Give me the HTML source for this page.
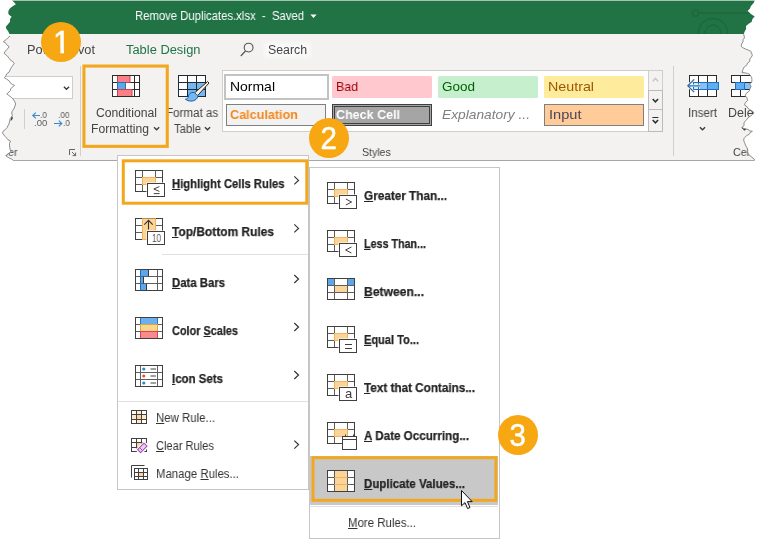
<!DOCTYPE html>
<html lang="en">
<head>
<meta charset="utf-8">
<title>Conditional Formatting - Highlight Cells Rules - Duplicate Values</title>
<style>
html,body{margin:0;padding:0;background:#fff;}
body{width:759px;height:539px;position:relative;overflow:hidden;font-family:"Liberation Sans",sans-serif;}
.a{position:absolute;box-sizing:border-box;}
.t{position:absolute;white-space:nowrap;transform-origin:0 50%;will-change:transform;line-height:16px;font-family:"Liberation Sans",sans-serif;}
.t u{text-decoration:underline;text-underline-offset:1px;text-decoration-thickness:1px;}
svg{position:absolute;overflow:visible;}
.badge{position:absolute;width:40px;height:40px;border-radius:50%;background:#f6a712;color:#fff;font-size:31px;line-height:41px;-webkit-text-stroke:0.5px #fff;text-align:center;font-family:"Liberation Sans",sans-serif;}
.one{display:inline-block;position:relative;left:0.6px;clip-path:polygon(0 0,100% 0,100% 27.8px,64% 27.8px,64% 100%,43% 100%,43% 27.8px,0 27.8px);}
.dg{display:inline-block;transform:scaleX(0.95);}
</style>
</head>
<body>
<!-- title bar -->
<div class="a" style="left:0;top:0;width:759px;height:34px;background:#217346;border-top:1px solid #a3c4b1;overflow:hidden;">
<svg width="759" height="34" viewBox="0 0 759 34" style="left:0;top:-1px;"><g fill="none" stroke="#1b683d" stroke-width="1.3"><circle cx="695.5" cy="13.2" r="3"/><path d="M698.5 13.2H756"/><circle cx="713" cy="33" r="8"/><circle cx="713" cy="33" r="14.5"/></g></svg>
</div>
<!-- ribbon -->
<div class="a" style="left:0;top:34px;width:759px;height:127px;background:#f3f2f1;border-bottom:1px solid #a6a6a6;"></div>

<!-- search glow -->
<div class="a" style="left:264px;top:42px;width:47px;height:16px;background:rgba(255,255,255,0.55);filter:blur(2px);"></div>
<!-- font combo -->
<div class="a" style="left:0;top:76px;width:73px;height:23px;background:#fff;border:1px solid #cfcdcb;"></div>
<!-- separators -->
<div class="a" style="left:24px;top:109px;width:1px;height:20px;background:#d2d0ce;"></div>
<div class="a" style="left:80px;top:66px;width:1px;height:90px;background:#d2d0ce;"></div>
<div class="a" style="left:673px;top:66px;width:1px;height:90px;background:#d2d0ce;"></div>

<!-- styles gallery -->
<div class="a" style="left:222px;top:70px;width:427px;height:62px;background:#fff;border:1px solid #d0cecc;"></div>
<div class="a" style="left:223.5px;top:73.5px;width:105px;height:26.5px;background:#fff;border:2.5px solid #c3c3c3;"></div>
<div class="a" style="left:332px;top:76px;width:100px;height:22px;background:#ffc7ce;border-radius:1.5px;"></div>
<div class="a" style="left:438px;top:76px;width:100px;height:22px;background:#c6efce;border-radius:1.5px;"></div>
<div class="a" style="left:544px;top:76px;width:100px;height:22px;background:#ffeb9c;border-radius:1.5px;"></div>
<div class="a" style="left:226px;top:104px;width:100px;height:22px;background:#f2f2f2;border:1px solid #7f7f7f;"></div>
<div class="a" style="left:332px;top:104px;width:100px;height:22px;background:#a5a5a5;border:1px solid #3f3f3f;box-shadow:inset 0 0 0 1px #a5a5a5,inset 0 0 0 2px #3f3f3f;"></div>
<div class="a" style="left:544px;top:104px;width:100px;height:22px;background:#ffcc99;border:1px solid #7f7f7f;"></div>
<!-- gallery scroll buttons -->
<div class="a" style="left:648px;top:70px;width:15px;height:21px;background:#f3f2f1;border:1px solid #d0cecc;"></div>
<div class="a" style="left:648px;top:90px;width:15px;height:20px;background:#f3f2f1;border:1px solid #bdbbb9;"></div>
<div class="a" style="left:648px;top:109px;width:15px;height:23px;background:#f3f2f1;border:1px solid #bdbbb9;"></div>


<!-- menu 1 -->
<div class="a" style="left:117px;top:155px;width:192px;height:335px;background:#fff;border:1px solid #c6c6c6;"></div>
<div class="a" style="left:162px;top:254px;width:146px;height:1px;background:#e1e1e1;"></div>
<div class="a" style="left:118px;top:401px;width:190px;height:1px;background:#e1e1e1;"></div>

<!-- menu 2 -->
<div class="a" style="left:309px;top:167px;width:191px;height:372px;background:#fff;border:1px solid #c6c6c6;"></div>
<div class="a" style="left:310px;top:456px;width:188px;height:48.5px;background:#c8c8c8;"></div>
<div class="a" style="left:310px;top:506px;width:188px;height:1px;background:#e1e1e1;"></div>

<svg width="759" height="539" viewBox="0 0 759 539" style="left:0;top:0;"><rect x="112.5" y="75.5" width="27" height="21" fill="#fff"/><line x1="117.5" y1="75.5" x2="117.5" y2="96.5" stroke="#2b2b2b" stroke-width="1"/><line x1="134.5" y1="75.5" x2="134.5" y2="96.5" stroke="#2b2b2b" stroke-width="1"/><line x1="112.5" y1="82.5" x2="139.5" y2="82.5" stroke="#2b2b2b" stroke-width="1"/><line x1="112.5" y1="89.5" x2="139.5" y2="89.5" stroke="#2b2b2b" stroke-width="1"/><rect x="112.5" y="75.5" width="27" height="21" fill="none" stroke="#2b2b2b" stroke-width="1"/>
<rect x="117.5" y="75.5" width="12.5" height="7" fill="#fb7f86" stroke="#c8424e" stroke-width="1"/>
<rect x="117.5" y="82.5" width="8" height="7" fill="#5ea6ea" stroke="#2f6fb0" stroke-width="1"/>
<rect x="117.5" y="89.5" width="14.5" height="7" fill="#fb7f86" stroke="#c8424e" stroke-width="1"/>
<rect x="112.5" y="75.5" width="27" height="21" fill="none" stroke="#2b2b2b" stroke-width="1"/>
<rect x="178.5" y="75.5" width="27" height="21" fill="#fff"/><rect x="187.5" y="82.5" width="18" height="14" fill="#74b7f3"/><line x1="187.5" y1="75.5" x2="187.5" y2="96.5" stroke="#1e2a36" stroke-width="1"/><line x1="196.5" y1="75.5" x2="196.5" y2="96.5" stroke="#1e2a36" stroke-width="1"/><line x1="178.5" y1="82.5" x2="205.5" y2="82.5" stroke="#1e2a36" stroke-width="1"/><line x1="178.5" y1="89.5" x2="205.5" y2="89.5" stroke="#1e2a36" stroke-width="1"/><rect x="178.5" y="75.5" width="27" height="21" fill="none" stroke="#1e2a36" stroke-width="1"/>
<path d="M207.6 81.6 L209 83 L197.6 95.6 L194.6 92.8 Z" fill="#fdf3e3" stroke="#2a2a2a" stroke-width="1" stroke-linejoin="round"/>
<path d="M194.4 92.6 C190.5 91.8 188.6 94.4 188.4 96.6 C188.2 98.4 186.8 99.2 185.4 99.2 C188.2 101.6 193.4 101.8 196 99.4 C198 97.6 198.2 95.6 197.8 95.6 Z" fill="#74b7f3" stroke="#1f5f9e" stroke-width="1" stroke-linejoin="round"/>
<rect x="689.5" y="75.5" width="27" height="21" fill="#fff"/><line x1="698.5" y1="75.5" x2="698.5" y2="96.5" stroke="#2b2b2b" stroke-width="1"/><line x1="707.5" y1="75.5" x2="707.5" y2="96.5" stroke="#2b2b2b" stroke-width="1"/><line x1="689.5" y1="82.5" x2="716.5" y2="82.5" stroke="#2b2b2b" stroke-width="1"/><line x1="689.5" y1="89.5" x2="716.5" y2="89.5" stroke="#2b2b2b" stroke-width="1"/><rect x="689.5" y="75.5" width="27" height="21" fill="none" stroke="#2b2b2b" stroke-width="1"/>
<rect x="693.5" y="82.5" width="25" height="7" fill="#62acf0" stroke="#1f6fbf" stroke-width="1"/>
<rect x="694" y="83" width="6" height="6" fill="#d6eafc"/>
<rect x="700" y="83" width="7.5" height="6" fill="#86c0f4"/>
<path d="M698.5 82.5 V89.5 M707.5 82.5 V89.5" fill="none" stroke="#1f6fbf" stroke-width="1"/>
<path d="M700 85.8 H688.4 M694.2 79.4 L687.8 85.8 L694.2 92.2" fill="none" stroke="#eaf4fd" stroke-width="2.6"/>
<path d="M700 85.8 H688.4 M694.2 79.4 L687.8 85.8 L694.2 92.2" fill="none" stroke="#2d6da3" stroke-width="1.2"/>
<rect x="731.5" y="75.5" width="27" height="7" fill="#fff" stroke="#2b2b2b" stroke-width="1"/>
<rect x="731.5" y="89.5" width="27" height="7" fill="#fff" stroke="#2b2b2b" stroke-width="1"/>
<path d="M740.5 75.5 V82.5 M740.5 89.5 V96.5" fill="none" stroke="#2b2b2b" stroke-width="1"/>
<rect x="735.5" y="82.5" width="9" height="7" fill="#62acf0" stroke="#1f6fbf" stroke-width="1"/>
<rect x="745" y="83" width="9" height="6" fill="#86c0f4"/>
<path d="M154.0 127.2 L156.6 129.8 L159.2 127.2" fill="none" stroke="#3a3a3a" stroke-width="1.3"/>
<path d="M204.9 127.2 L207.5 129.8 L210.1 127.2" fill="none" stroke="#3a3a3a" stroke-width="1.3"/>
<path d="M699.9 127.2 L702.5 129.8 L705.1 127.2" fill="none" stroke="#3a3a3a" stroke-width="1.3"/>
<path d="M741.9 127.2 L744.5 129.8 L747.1 127.2" fill="none" stroke="#3a3a3a" stroke-width="1.3"/>
<path d="M63.9 86.7 L66.5 89.3 L69.1 86.7" fill="none" stroke="#3a3a3a" stroke-width="1.3"/>
<path d="M652.7 81.2 L655.4 78.5 L658.1 81.2" fill="none" stroke="#c4c2c0" stroke-width="1.3"/>
<path d="M652.7 99 L655.4 101.8 L658.1 99" fill="none" stroke="#2e2e2e" stroke-width="1.5"/>
<path d="M652.7 120 L655.4 122.8 L658.1 120" fill="none" stroke="#2e2e2e" stroke-width="1.5"/>
<line x1="652.4" y1="117.5" x2="658.4" y2="117.5" stroke="#2e2e2e" stroke-width="1"/>
<circle cx="248.6" cy="47.6" r="4.4" fill="none" stroke="#555" stroke-width="1.1"/>
<line x1="245.5" y1="51" x2="240.8" y2="56" stroke="#555" stroke-width="1.2"/>
<path d="M310.4 14.6 H316.6 L313.5 18 Z" fill="#fff" stroke="none" stroke-width="0"/>
<path d="M40 115.5 H33 M35.8 112.6 L32.8 115.5 L35.8 118.4" fill="none" stroke="#3a88cf" stroke-width="1.15"/>
<path d="M54 123.5 H61.6 M58.8 120.6 L61.8 123.5 L58.8 126.4" fill="none" stroke="#3a88cf" stroke-width="1.15"/>
<path d="M11.2 116.6 C12.6 116.4 13.2 117.6 12.6 118.8 L11.4 120.6 L10.4 120.4 L11.2 118.6 Z" fill="#333" stroke="none" stroke-width="0"/>
<path d="M69.5 155 V149.5 H75" fill="none" stroke="#666" stroke-width="1"/>
<path d="M72 152 L75.6 155.6 M75.6 152.6 V155.6 H72.6" fill="none" stroke="#666" stroke-width="1"/>
<rect x="135.5" y="170.5" width="27" height="21" fill="#fff"/><rect x="142.5" y="177.5" width="13" height="7" fill="#fbd49a"/><line x1="142.5" y1="170.5" x2="142.5" y2="191.5" stroke="#5e5e5e" stroke-width="1"/><line x1="155.5" y1="170.5" x2="155.5" y2="191.5" stroke="#5e5e5e" stroke-width="1"/><line x1="135.5" y1="177.5" x2="162.5" y2="177.5" stroke="#5e5e5e" stroke-width="1"/><line x1="135.5" y1="184.5" x2="162.5" y2="184.5" stroke="#5e5e5e" stroke-width="1"/><rect x="135.5" y="170.5" width="27" height="21" fill="none" stroke="#404040" stroke-width="1"/>
<rect x="142.5" y="177.5" width="13" height="7" fill="#fbd49a" stroke="#f3b458" stroke-width="1"/>
<rect x="146.5" y="182.5" width="19" height="15" fill="#fff"/><rect x="147.5" y="183.5" width="17" height="13" fill="#fff" stroke="#404040" stroke-width="1"/>
<path d="M159.4 186.6 L153.8 189 L159.4 191.4 M153.8 193.6 H159.6" fill="none" stroke="#404040" stroke-width="1"/>
<rect x="135.5" y="218.5" width="27" height="21" fill="#fff"/><line x1="142.5" y1="218.5" x2="142.5" y2="239.5" stroke="#5e5e5e" stroke-width="1"/><line x1="155.5" y1="218.5" x2="155.5" y2="239.5" stroke="#5e5e5e" stroke-width="1"/><line x1="135.5" y1="225.5" x2="162.5" y2="225.5" stroke="#5e5e5e" stroke-width="1"/><line x1="135.5" y1="232.5" x2="162.5" y2="232.5" stroke="#5e5e5e" stroke-width="1"/><rect x="135.5" y="218.5" width="27" height="21" fill="none" stroke="#404040" stroke-width="1"/>
<rect x="142.5" y="218.5" width="13" height="21" fill="#fbd49a" stroke="#f3b458" stroke-width="1"/>
<line x1="142.5" y1="218.5" x2="155.5" y2="218.5" stroke="#b98a4a" stroke-width="1"/>
<path d="M148.5 229.5 V220.5 M144.3 224.7 L148.5 220.3 L152.7 224.7" fill="none" stroke="#333" stroke-width="1.1"/>
<rect x="146.5" y="230.5" width="19" height="15" fill="#fff"/><rect x="147.5" y="231.5" width="17" height="13" fill="#fff" stroke="#404040" stroke-width="1"/>
<rect x="135.5" y="269.5" width="27" height="21" fill="#fff"/><rect x="140.5" y="269.5" width="8" height="7" fill="#5ea6ea"/><rect x="140.5" y="276.5" width="3" height="7" fill="#5ea6ea"/><rect x="140.5" y="283.5" width="6" height="7" fill="#5ea6ea"/><line x1="157.5" y1="269.5" x2="157.5" y2="290.5" stroke="#5e5e5e" stroke-width="1"/><line x1="135.5" y1="276.5" x2="162.5" y2="276.5" stroke="#5e5e5e" stroke-width="1"/><line x1="135.5" y1="283.5" x2="162.5" y2="283.5" stroke="#5e5e5e" stroke-width="1"/><rect x="135.5" y="269.5" width="27" height="21" fill="none" stroke="#404040" stroke-width="1"/>
<path d="M148.5 269.5 V276.5 M143.5 276.5 V283.5 M146.5 283.5 V290.5" fill="none" stroke="#3a3a3a" stroke-width="1"/>
<line x1="140.5" y1="269.5" x2="140.5" y2="290.5" stroke="#1b6ec2" stroke-width="1"/>
<rect x="135.5" y="317.5" width="27" height="21" fill="#fff"/><line x1="135.5" y1="324.5" x2="162.5" y2="324.5" stroke="#5e5e5e" stroke-width="1"/><line x1="135.5" y1="331.5" x2="162.5" y2="331.5" stroke="#5e5e5e" stroke-width="1"/><rect x="135.5" y="317.5" width="27" height="21" fill="none" stroke="#404040" stroke-width="1"/>
<rect x="140.5" y="317.5" width="17" height="7" fill="#6cb0ee" stroke="#2a78c4" stroke-width="1"/>
<rect x="140.5" y="324.5" width="17" height="7" fill="#f9d58d" stroke="#e0a43c" stroke-width="1"/>
<rect x="140.5" y="331.5" width="17" height="7" fill="#fb8a8f" stroke="#d8474f" stroke-width="1"/>
<rect x="135.5" y="317.5" width="27" height="21" fill="none" stroke="#404040" stroke-width="1"/>
<rect x="135.5" y="365.5" width="27" height="21" fill="#fff"/><line x1="140.5" y1="365.5" x2="140.5" y2="386.5" stroke="#5e5e5e" stroke-width="1"/><line x1="157.5" y1="365.5" x2="157.5" y2="386.5" stroke="#5e5e5e" stroke-width="1"/><line x1="135.5" y1="372.5" x2="162.5" y2="372.5" stroke="#5e5e5e" stroke-width="1"/><line x1="135.5" y1="379.5" x2="162.5" y2="379.5" stroke="#5e5e5e" stroke-width="1"/><rect x="135.5" y="365.5" width="27" height="21" fill="none" stroke="#404040" stroke-width="1"/>
<circle cx="143.8" cy="369" r="1.6" fill="#2b87c9"/>
<line x1="150.5" y1="369" x2="156" y2="369" stroke="#404040" stroke-width="1"/>
<circle cx="143.8" cy="376" r="1.6" fill="#e0533e"/>
<line x1="150.5" y1="376" x2="156" y2="376" stroke="#404040" stroke-width="1"/>
<circle cx="143.8" cy="383" r="1.6" fill="#2b87c9"/>
<line x1="150.5" y1="383" x2="156" y2="383" stroke="#404040" stroke-width="1"/>
<rect x="131.5" y="410.5" width="15" height="13" fill="#fff"/><rect x="136.5" y="414.5" width="5" height="5" fill="#fbd49a"/><rect x="136.5" y="410.5" width="5" height="4" fill="#fde9c9"/><rect x="136.5" y="419.5" width="5" height="4" fill="#fde9c9"/><rect x="131.5" y="414.5" width="5" height="5" fill="#fde9c9"/><rect x="141.5" y="414.5" width="5" height="5" fill="#fde9c9"/><line x1="136.5" y1="410.5" x2="136.5" y2="423.5" stroke="#404040" stroke-width="1"/><line x1="141.5" y1="410.5" x2="141.5" y2="423.5" stroke="#404040" stroke-width="1"/><line x1="131.5" y1="414.5" x2="146.5" y2="414.5" stroke="#404040" stroke-width="1"/><line x1="131.5" y1="419.5" x2="146.5" y2="419.5" stroke="#404040" stroke-width="1"/><rect x="131.5" y="410.5" width="15" height="13" fill="none" stroke="#404040" stroke-width="1"/>
<rect x="131.5" y="438.5" width="15" height="13" fill="#fff"/><rect x="136.5" y="442.5" width="5" height="5" fill="#fbd49a"/><line x1="136.5" y1="438.5" x2="136.5" y2="451.5" stroke="#404040" stroke-width="1"/><line x1="141.5" y1="438.5" x2="141.5" y2="451.5" stroke="#404040" stroke-width="1"/><line x1="131.5" y1="442.5" x2="146.5" y2="442.5" stroke="#404040" stroke-width="1"/><line x1="131.5" y1="447.5" x2="146.5" y2="447.5" stroke="#404040" stroke-width="1"/><rect x="131.5" y="438.5" width="15" height="13" fill="none" stroke="#404040" stroke-width="1"/>
<path d="M136.6 449.8 L144.2 442.2 L148.2 446.2 L140.6 453.8 Z" fill="#fff" stroke="#fff" stroke-width="2.2" stroke-linejoin="round"/>
<path d="M137.6 449.6 L144 443.2 L147 446.2 L140.6 452.6 Z" fill="#ead3f1" stroke="#a550c0" stroke-width="1.1" stroke-linejoin="round"/>
<path d="M139.6 447.6 L142.6 450.6" fill="none" stroke="#a550c0" stroke-width="1"/>
<path d="M131.5 477.5 V465.5 H144.5" fill="none" stroke="#404040" stroke-width="1"/>
<rect x="134.5" y="468.5" width="13" height="11" fill="#fff"/><rect x="138.5" y="472.5" width="5" height="4" fill="#fbd49a"/><line x1="138.5" y1="468.5" x2="138.5" y2="479.5" stroke="#404040" stroke-width="1"/><line x1="143.5" y1="468.5" x2="143.5" y2="479.5" stroke="#404040" stroke-width="1"/><line x1="134.5" y1="472.5" x2="147.5" y2="472.5" stroke="#404040" stroke-width="1"/><line x1="134.5" y1="476.5" x2="147.5" y2="476.5" stroke="#404040" stroke-width="1"/><rect x="134.5" y="468.5" width="13" height="11" fill="none" stroke="#404040" stroke-width="1"/>
<path d="M294.3 176.4 L298.5 180.4 L294.3 184.4" fill="none" stroke="#383838" stroke-width="1.25"/>
<path d="M294.3 224.4 L298.5 228.4 L294.3 232.4" fill="none" stroke="#383838" stroke-width="1.25"/>
<path d="M294.3 275 L298.5 279 L294.3 283" fill="none" stroke="#383838" stroke-width="1.25"/>
<path d="M294.3 323 L298.5 327 L294.3 331" fill="none" stroke="#383838" stroke-width="1.25"/>
<path d="M294.3 371 L298.5 375 L294.3 379" fill="none" stroke="#383838" stroke-width="1.25"/>
<path d="M294.3 440.6 L298.5 444.6 L294.3 448.6" fill="none" stroke="#383838" stroke-width="1.25"/>
<rect x="327.5" y="182.5" width="27" height="21" fill="#fff"/><rect x="334.5" y="189.5" width="13" height="7" fill="#fbd49a"/><line x1="334.5" y1="182.5" x2="334.5" y2="203.5" stroke="#5e5e5e" stroke-width="1"/><line x1="347.5" y1="182.5" x2="347.5" y2="203.5" stroke="#5e5e5e" stroke-width="1"/><line x1="327.5" y1="189.5" x2="354.5" y2="189.5" stroke="#5e5e5e" stroke-width="1"/><line x1="327.5" y1="196.5" x2="354.5" y2="196.5" stroke="#5e5e5e" stroke-width="1"/><rect x="327.5" y="182.5" width="27" height="21" fill="none" stroke="#404040" stroke-width="1"/>
<rect x="334.5" y="189.5" width="13" height="7" fill="#fbd49a" stroke="#f3b458" stroke-width="1"/>
<rect x="338.5" y="194.5" width="19" height="15" fill="#fff"/><rect x="339.5" y="195.5" width="17" height="13" fill="#fff" stroke="#404040" stroke-width="1"/>
<path d="M345.8 199 L351.6 202 L345.8 205" fill="none" stroke="#404040" stroke-width="1"/>
<rect x="327.5" y="230.5" width="27" height="21" fill="#fff"/><rect x="334.5" y="237.5" width="13" height="7" fill="#fbd49a"/><line x1="334.5" y1="230.5" x2="334.5" y2="251.5" stroke="#5e5e5e" stroke-width="1"/><line x1="347.5" y1="230.5" x2="347.5" y2="251.5" stroke="#5e5e5e" stroke-width="1"/><line x1="327.5" y1="237.5" x2="354.5" y2="237.5" stroke="#5e5e5e" stroke-width="1"/><line x1="327.5" y1="244.5" x2="354.5" y2="244.5" stroke="#5e5e5e" stroke-width="1"/><rect x="327.5" y="230.5" width="27" height="21" fill="none" stroke="#404040" stroke-width="1"/>
<rect x="334.5" y="237.5" width="13" height="7" fill="#fbd49a" stroke="#f3b458" stroke-width="1"/>
<rect x="338.5" y="242.5" width="19" height="15" fill="#fff"/><rect x="339.5" y="243.5" width="17" height="13" fill="#fff" stroke="#404040" stroke-width="1"/>
<path d="M351.4 247 L345.6 250 L351.4 253" fill="none" stroke="#404040" stroke-width="1"/>
<rect x="327.5" y="278.5" width="27" height="21" fill="#fff"/><rect x="327.5" y="278.5" width="7" height="7" fill="#5ea6ea"/><rect x="347.5" y="278.5" width="7" height="7" fill="#5ea6ea"/><rect x="334.5" y="285.5" width="13" height="7" fill="#fbd49a"/><line x1="334.5" y1="278.5" x2="334.5" y2="299.5" stroke="#5e5e5e" stroke-width="1"/><line x1="347.5" y1="278.5" x2="347.5" y2="299.5" stroke="#5e5e5e" stroke-width="1"/><line x1="327.5" y1="285.5" x2="354.5" y2="285.5" stroke="#5e5e5e" stroke-width="1"/><line x1="327.5" y1="292.5" x2="354.5" y2="292.5" stroke="#5e5e5e" stroke-width="1"/><rect x="327.5" y="278.5" width="27" height="21" fill="none" stroke="#404040" stroke-width="1"/>
<rect x="327.5" y="326.5" width="27" height="21" fill="#fff"/><rect x="334.5" y="333.5" width="13" height="7" fill="#fbd49a"/><line x1="334.5" y1="326.5" x2="334.5" y2="347.5" stroke="#5e5e5e" stroke-width="1"/><line x1="347.5" y1="326.5" x2="347.5" y2="347.5" stroke="#5e5e5e" stroke-width="1"/><line x1="327.5" y1="333.5" x2="354.5" y2="333.5" stroke="#5e5e5e" stroke-width="1"/><line x1="327.5" y1="340.5" x2="354.5" y2="340.5" stroke="#5e5e5e" stroke-width="1"/><rect x="327.5" y="326.5" width="27" height="21" fill="none" stroke="#404040" stroke-width="1"/>
<rect x="334.5" y="333.5" width="13" height="7" fill="#fbd49a" stroke="#f3b458" stroke-width="1"/>
<rect x="338.5" y="338.5" width="19" height="15" fill="#fff"/><rect x="339.5" y="339.5" width="17" height="13" fill="#fff" stroke="#404040" stroke-width="1"/>
<path d="M345 344.5 H352 M345 348.5 H352" fill="none" stroke="#404040" stroke-width="1"/>
<rect x="327.5" y="374.5" width="27" height="21" fill="#fff"/><rect x="334.5" y="381.5" width="13" height="7" fill="#fbd49a"/><line x1="334.5" y1="374.5" x2="334.5" y2="395.5" stroke="#5e5e5e" stroke-width="1"/><line x1="347.5" y1="374.5" x2="347.5" y2="395.5" stroke="#5e5e5e" stroke-width="1"/><line x1="327.5" y1="381.5" x2="354.5" y2="381.5" stroke="#5e5e5e" stroke-width="1"/><line x1="327.5" y1="388.5" x2="354.5" y2="388.5" stroke="#5e5e5e" stroke-width="1"/><rect x="327.5" y="374.5" width="27" height="21" fill="none" stroke="#404040" stroke-width="1"/>
<rect x="334.5" y="381.5" width="13" height="7" fill="#fbd49a" stroke="#f3b458" stroke-width="1"/>
<rect x="338.5" y="386.5" width="19" height="15" fill="#fff"/><rect x="339.5" y="387.5" width="17" height="13" fill="#fff" stroke="#404040" stroke-width="1"/>
<rect x="327.5" y="422.5" width="27" height="21" fill="#fff"/><rect x="334.5" y="429.5" width="13" height="7" fill="#fbd49a"/><line x1="334.5" y1="422.5" x2="334.5" y2="443.5" stroke="#5e5e5e" stroke-width="1"/><line x1="347.5" y1="422.5" x2="347.5" y2="443.5" stroke="#5e5e5e" stroke-width="1"/><line x1="327.5" y1="429.5" x2="354.5" y2="429.5" stroke="#5e5e5e" stroke-width="1"/><line x1="327.5" y1="436.5" x2="354.5" y2="436.5" stroke="#5e5e5e" stroke-width="1"/><rect x="327.5" y="422.5" width="27" height="21" fill="none" stroke="#404040" stroke-width="1"/>
<rect x="334.5" y="429.5" width="13" height="7" fill="#fbd49a" stroke="#f3b458" stroke-width="1"/>
<rect x="342.5" y="436.5" width="14" height="13" fill="#fff" stroke="#404040" stroke-width="1"/>
<line x1="342.5" y1="439.5" x2="356.5" y2="439.5" stroke="#404040" stroke-width="1"/>
<path d="M345.5 434.5 V437 M353.5 434.5 V437" fill="none" stroke="#404040" stroke-width="1"/>
<rect x="327.5" y="470.5" width="27" height="21" fill="#fff"/><rect x="334.5" y="470.5" width="13" height="21" fill="#fbd49a"/><line x1="334.5" y1="470.5" x2="334.5" y2="491.5" stroke="#5e5e5e" stroke-width="1"/><line x1="347.5" y1="470.5" x2="347.5" y2="491.5" stroke="#5e5e5e" stroke-width="1"/><line x1="327.5" y1="477.5" x2="354.5" y2="477.5" stroke="#5e5e5e" stroke-width="1"/><line x1="327.5" y1="484.5" x2="354.5" y2="484.5" stroke="#5e5e5e" stroke-width="1"/><rect x="327.5" y="470.5" width="27" height="21" fill="none" stroke="#404040" stroke-width="1"/>
<path d="M334.5 477.5 H347.5 M334.5 484.5 H347.5" fill="none" stroke="#f3b458" stroke-width="1"/></svg>
<span class="t" id="t0" style="left:135px;top:8px;font-size:12.5px;color:#fff;transform:scaleX(0.9043);">Remove Duplicates.xlsx&nbsp; -&nbsp; Saved</span>
<span class="t" id="t1" style="left:27px;top:42px;font-size:12px;color:#444;transform:scaleX(1.0620);">Power Pivot</span>
<span class="t" id="t2" style="left:125.5px;top:42px;font-size:12px;color:#217346;transform:scaleX(1.0739);">Table Design</span>
<span class="t" id="t3" style="left:268px;top:42px;font-size:12px;color:#444;transform:scaleX(1.0255);">Search</span>
<span class="t" id="t4" style="left:96px;top:105px;font-size:12px;color:#444;transform:scaleX(1.0159);">Conditional</span>
<span class="t" id="t5" style="left:91px;top:121px;font-size:12px;color:#444;transform:scaleX(1.0112);">Formatting</span>
<span class="t" id="t6" style="left:166px;top:105px;font-size:12px;color:#444;transform:scaleX(0.9664);">Format as</span>
<span class="t" id="t7" style="left:174px;top:121px;font-size:12px;color:#444;transform:scaleX(0.9412);">Table</span>
<span class="t" id="t8" style="left:688px;top:105px;font-size:12px;color:#444;transform:scaleX(0.9662);">Insert</span>
<span class="t" id="t9" style="left:728px;top:105px;font-size:12px;color:#444;transform:scaleX(1.0378);">Delete</span>
<span class="t" id="t10" style="left:362px;top:144px;font-size:11px;color:#444;transform:scaleX(0.9610);">Styles</span>
<span class="t" id="t11" style="left:-20.5px;top:144px;font-size:11px;color:#444;transform:scaleX(0.9585);">Number</span>
<span class="t" id="t12" style="left:733.3px;top:144px;font-size:11px;color:#444;transform:scaleX(0.9692);">Cells</span>
<span class="t" id="t13" style="left:230px;top:79px;font-size:13px;color:#000;transform:scaleX(1.0738);">Normal</span>
<span class="t" id="t14" style="left:336px;top:79px;font-size:13px;color:#9c0006;transform:scaleX(0.9507);">Bad</span>
<span class="t" id="t15" style="left:442px;top:79px;font-size:13px;color:#006100;transform:scaleX(1.0373);">Good</span>
<span class="t" id="t16" style="left:548px;top:79px;font-size:13px;color:#9c5700;transform:scaleX(1.0973);">Neutral</span>
<span class="t" id="t17" style="left:230px;top:107px;font-size:13px;color:#f5871a;font-weight:700;transform:scaleX(0.9703);">Calculation</span>
<span class="t" id="t18" style="left:336px;top:107px;font-size:13px;color:#fff;font-weight:700;transform:scaleX(0.9626);">Check Cell</span>
<span class="t" id="t19" style="left:442px;top:107px;font-size:13px;color:#7f7f7f;font-style:italic;transform:scaleX(1.0588);">Explanatory ...</span>
<span class="t" id="t20" style="left:548.5px;top:107px;font-size:13px;color:#4d4656;transform:scaleX(1.1237);">Input</span>
<span class="t" id="t21" style="left:172px;top:176px;font-size:13px;color:#242424;font-weight:700;transform:scaleX(0.8653);-webkit-text-stroke:0.25px #242424;"><u>H</u>ighlight Cells Rules</span>
<span class="t" id="t22" style="left:172px;top:224px;font-size:13px;color:#242424;font-weight:700;transform:scaleX(0.9190);-webkit-text-stroke:0.25px #242424;"><u>T</u>op/Bottom Rules</span>
<span class="t" id="t23" style="left:172px;top:275px;font-size:13px;color:#242424;font-weight:700;transform:scaleX(0.8731);-webkit-text-stroke:0.25px #242424;"><u>D</u>ata Bars</span>
<span class="t" id="t24" style="left:172px;top:323px;font-size:13px;color:#242424;font-weight:700;transform:scaleX(0.8378);-webkit-text-stroke:0.25px #242424;">Color <u>S</u>cales</span>
<span class="t" id="t25" style="left:172px;top:371px;font-size:13px;color:#242424;font-weight:700;transform:scaleX(0.8822);-webkit-text-stroke:0.25px #242424;"><u>I</u>con Sets</span>
<span class="t" id="t26" style="left:156px;top:410px;font-size:12.5px;color:#333;transform:scaleX(0.9130);"><u>N</u>ew Rule...</span>
<span class="t" id="t27" style="left:156px;top:438px;font-size:12.5px;color:#333;transform:scaleX(0.8880);"><u>C</u>lear Rules</span>
<span class="t" id="t28" style="left:156px;top:466px;font-size:12.5px;color:#333;transform:scaleX(0.9116);">Manage <u>R</u>ules...</span>
<span class="t" id="t29" style="left:364px;top:188px;font-size:13px;color:#242424;font-weight:700;transform:scaleX(0.9045);-webkit-text-stroke:0.25px #242424;"><u>G</u>reater Than...</span>
<span class="t" id="t30" style="left:364px;top:236px;font-size:13px;color:#242424;font-weight:700;transform:scaleX(0.8249);-webkit-text-stroke:0.25px #242424;"><u>L</u>ess Than...</span>
<span class="t" id="t31" style="left:364px;top:284px;font-size:13px;color:#242424;font-weight:700;transform:scaleX(0.9329);-webkit-text-stroke:0.25px #242424;"><u>B</u>etween...</span>
<span class="t" id="t32" style="left:364px;top:332px;font-size:13px;color:#242424;font-weight:700;transform:scaleX(0.8492);-webkit-text-stroke:0.25px #242424;"><u>E</u>qual To...</span>
<span class="t" id="t33" style="left:364px;top:380px;font-size:13px;color:#242424;font-weight:700;transform:scaleX(0.9004);-webkit-text-stroke:0.25px #242424;"><u>T</u>ext that Contains...</span>
<span class="t" id="t34" style="left:364px;top:428px;font-size:13px;color:#242424;font-weight:700;transform:scaleX(0.8953);-webkit-text-stroke:0.25px #242424;"><u>A</u> Date Occurring...</span>
<span class="t" id="t35" style="left:364px;top:476px;font-size:13px;color:#242424;font-weight:700;transform:scaleX(0.8846);-webkit-text-stroke:0.25px #242424;"><u>D</u>uplicate Values...</span>
<span class="t" id="t36" style="left:348px;top:515px;font-size:12.5px;color:#333;transform:scaleX(0.9147);"><u>M</u>ore Rules...</span>
<span class="t" id="t37" style="left:40.3px;top:107px;font-size:9.5px;color:#5c5c5c;transform:scaleX(0.8693);">.0</span>
<span class="t" id="t38" style="left:34.3px;top:115px;font-size:9.5px;color:#5c5c5c;transform:scaleX(0.9759);">.00</span>
<span class="t" id="t39" style="left:58px;top:107px;font-size:9.5px;color:#5c5c5c;transform:scaleX(0.8624);">.00</span>
<span class="t" id="t40" style="left:62.6px;top:115px;font-size:9.5px;color:#5c5c5c;transform:scaleX(0.8567);">.0</span>
<span class="t" id="t41" style="left:152.2px;top:230px;font-size:10.5px;color:#4a4a4a;transform:scaleX(0.7786);">10</span>
<span class="t" id="t42" style="left:344.6px;top:386px;font-size:13px;color:#3a3a3a;transform:scaleX(0.9952);">a</span>
<svg width="759" height="539" viewBox="0 0 759 539" style="left:0;top:0;"><path d="M0 -1 L11.7 0 L13.5 1.8 L15.9 4.2 L14.2 5.2 L12 6.8 L10 8.3 L8.4 10.9 L8.3 13.4 L9.2 15 L11.7 16.7 L10.1 18.8 L10 21.7 L7.8 24.5 L5.8 26.7 L6.3 28.7 L8.3 31.6 L9.2 33.4 L10 36 L7.9 37.8 L6.4 39.4 L3.3 41.7 L5.9 43.2 L6.6 44.7 L9.2 46.7 L7.2 49.2 L5.3 51.2 L4.2 53.4 L6.1 55 L7.6 56.3 L9.2 58.4 L10.1 59.8 L12.9 61.7 L14.2 63.4 L12.5 65.7 L11.3 67.6 L10 70 L9.1 72.1 L6.7 73.9 L5.8 76.1 L4.3 77.7 L6.7 79.2 L9.1 80.8 L10.2 82.8 L12.2 84.3 L14.5 85.4 L12.3 87.1 L10.6 89 L10.4 90.6 L9 92 L6.8 93.9 L9.2 95.7 L11.1 97.2 L13 98.9 L14.9 101.9 L15.6 104 L14.3 108 L13 110.1 L11.7 111.9 L12.3 115.8 L10.2 118.6 L9.7 121 L9 123.9 L7.8 126 L7.1 127.6 L5 129.8 L3 131.4 L2.6 133.3 L5.2 136.5 L6.3 137.7 L7.9 139.7 L10.4 141 L9.4 143.8 L9.7 147 L10.2 149.8 L11 152 L7.6 153.9 L5.8 155.8 L8.3 157.5 L11.2 158.9 L13 160 L13 162 L0 162 Z" fill="#fff"/><path d="M759 -1 L754.7 0 L754 2.4 L752.3 4.4 L750.8 6.3 L750 8.6 L747.6 11 L749.4 12.5 L750.6 13.8 L753.2 15.5 L754.7 16.6 L752.4 19.1 L751.6 22 L749 23.6 L748.2 24.3 L746 26 L746.1 29.1 L744.7 31.4 L743.7 34 L744.5 37.9 L743.1 39.6 L743 41.8 L741.5 44.1 L741.3 46.5 L742.8 47.7 L745.9 49.2 L748.5 50.2 L750.8 51.3 L752.4 55.2 L751.2 57.3 L749.9 58.9 L749.7 61.5 L747.6 63 L746.7 65.3 L744.2 67 L743 69.4 L742 72.6 L744 72.7 L747.3 73.4 L749.2 74 L751.6 77.3 L751.9 79.5 L751.8 82.2 L749.7 83.9 L751.1 86.4 L750 88.7 L749.3 91 L746.1 93.5 L745.3 95.8 L747 97.9 L747.6 100.5 L745.3 102.6 L744.5 105 L747.2 106.8 L747.6 108 L749.5 109.4 L752.6 111.1 L754 113 L752.3 114.6 L749.9 116.4 L748 117.9 L746.9 119.4 L745 121.3 L743.9 123.1 L744.1 125.6 L742 127.3 L743.7 128.4 L745.6 128.8 L748.9 129.8 L749.6 130.9 L752.4 131.3 L750.1 132.6 L749.4 134.2 L746.8 135.5 L744.7 137.5 L743.7 139 L744 141.5 L745 143.8 L746 146.2 L747.6 148.8 L747.7 151.7 L748.4 154 L749.9 155.7 L753.3 158.3 L754.7 160 L754.7 162 L759 162 Z" fill="#fff"/><path d="M10 36 L7.9 37.8 L6.4 39.4 L3.3 41.7 L5.9 43.2 L6.6 44.7 L9.2 46.7 L7.2 49.2 L5.3 51.2 L4.2 53.4 L6.1 55 L7.6 56.3 L9.2 58.4 L10.1 59.8 L12.9 61.7 L14.2 63.4 L12.5 65.7 L11.3 67.6 L10 70 L9.1 72.1 L6.7 73.9 L5.8 76.1 L4.3 77.7 L6.7 79.2 L9.1 80.8 L10.2 82.8 L12.2 84.3 L14.5 85.4 L12.3 87.1 L10.6 89 L10.4 90.6 L9 92 L6.8 93.9 L9.2 95.7 L11.1 97.2 L13 98.9 L14.9 101.9 L15.6 104 L14.3 108 L13 110.1 L11.7 111.9 L12.3 115.8 L10.2 118.6 L9.7 121 L9 123.9 L7.8 126 L7.1 127.6 L5 129.8 L3 131.4 L2.6 133.3 L5.2 136.5 L6.3 137.7 L7.9 139.7 L10.4 141 L9.4 143.8 L9.7 147 L10.2 149.8 L11 152 L7.6 153.9 L5.8 155.8 L8.3 157.5 L11.2 158.9 L13 160" fill="none" stroke="#808080" stroke-width="0.9" stroke-linejoin="round"/><path d="M743.7 34 L744.5 37.9 L743.1 39.6 L743 41.8 L741.5 44.1 L741.3 46.5 L742.8 47.7 L745.9 49.2 L748.5 50.2 L750.8 51.3 L752.4 55.2 L751.2 57.3 L749.9 58.9 L749.7 61.5 L747.6 63 L746.7 65.3 L744.2 67 L743 69.4 L742 72.6 L744 72.7 L747.3 73.4 L749.2 74 L751.6 77.3 L751.9 79.5 L751.8 82.2 L749.7 83.9 L751.1 86.4 L750 88.7 L749.3 91 L746.1 93.5 L745.3 95.8 L747 97.9 L747.6 100.5 L745.3 102.6 L744.5 105 L747.2 106.8 L747.6 108 L749.5 109.4 L752.6 111.1 L754 113 L752.3 114.6 L749.9 116.4 L748 117.9 L746.9 119.4 L745 121.3 L743.9 123.1 L744.1 125.6 L742 127.3 L743.7 128.4 L745.6 128.8 L748.9 129.8 L749.6 130.9 L752.4 131.3 L750.1 132.6 L749.4 134.2 L746.8 135.5 L744.7 137.5 L743.7 139 L744 141.5 L745 143.8 L746 146.2 L747.6 148.8 L747.7 151.7 L748.4 154 L749.9 155.7 L753.3 158.3 L754.7 160" fill="none" stroke="#808080" stroke-width="0.9" stroke-linejoin="round"/></svg>
<!-- orange highlights -->
<svg width="759" height="539" viewBox="0 0 759 539" style="left:0;top:0;"><rect x="83.95" y="66.05" width="83.3" height="80.3" fill="none" stroke="#f2a71e" stroke-width="3.1"/><rect x="123.3" y="160.8" width="183.5" height="42.4" fill="none" stroke="#f2a71e" stroke-width="3"/><rect x="313" y="457.7" width="182.9" height="42.6" fill="none" stroke="#f2a71e" stroke-width="3"/></svg>
<svg width="759" height="539" viewBox="0 0 759 539" style="left:0;top:0;"><path d="M461.5 490.5 V505.8 L465 502.6 L467.6 508.6 L470 507.5 L467.4 501.6 H472.2 Z" fill="#fff" stroke="#111" stroke-width="1" stroke-linejoin="miter"/></svg>
<!-- badges -->
<div class="badge" style="left:41px;top:22px;"><span class="one">1</span></div>
<div class="badge" style="left:309px;top:118px;"><span class="dg">2</span></div>
<div class="badge" style="left:498px;top:415px;"><span class="dg">3</span></div>
</body>
</html>
